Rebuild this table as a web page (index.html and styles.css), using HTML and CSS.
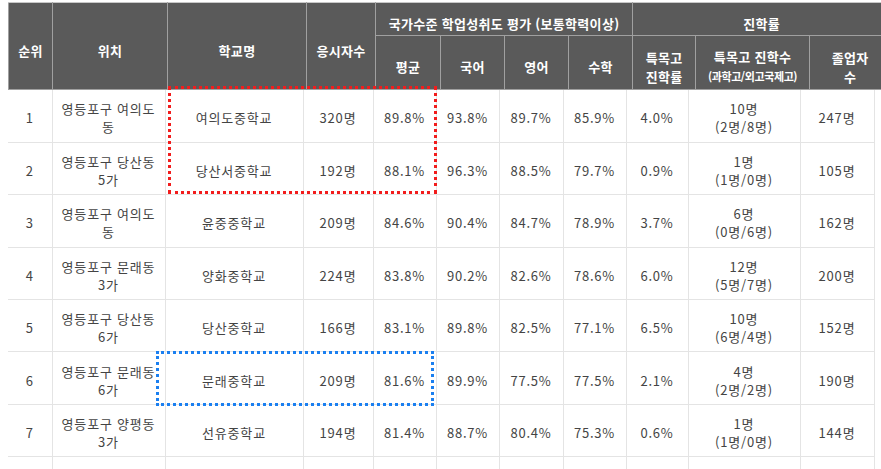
FILE: index.html
```html
<!DOCTYPE html>
<html lang="ko">
<head>
<meta charset="utf-8">
<title>영등포구 중학교 학업성취도</title>
<link rel="stylesheet" href="styles.css">
</head>
<body>
<div class="page">
  <table class="grid grid-head">
    <colgroup>
      <col class="w44"><col class="w115"><col class="w139"><col class="w69"><col class="w65">
      <col class="w64"><col class="w64"><col class="w64"><col class="w63"><col class="w114"><col class="w81">
    </colgroup>
    <tr class="hr1">
      <th rowspan="2">순위</th>
      <th rowspan="2">위치</th>
      <th rowspan="2">학교명</th>
      <th rowspan="2">응시자수</th>
      <th colspan="4">국가수준 학업성취도 평가 (보통학력이상)</th>
      <th colspan="3">진학률</th>
    </tr>
    <tr class="hr2">
      <th>평균</th>
      <th>국어</th>
      <th>영어</th>
      <th>수학</th>
      <th>특목고<br>진학률</th>
      <th>특목고 진학수<br><span class="sub">(과학고/외고국제고)</span></th>
      <th>졸업자<br>수</th>
    </tr>
  </table>
  <table class="grid grid-body">
    <colgroup>
      <col class="w44"><col class="w113"><col class="w138"><col class="w70"><col class="w63">
      <col class="w63"><col class="w64"><col class="w63"><col class="w62"><col class="w112"><col class="w74">
    </colgroup>
    <tr><td>1</td><td>영등포구 여의도동</td><td>여의도중학교</td><td>320명</td><td>89.8%</td><td>93.8%</td><td>89.7%</td><td>85.9%</td><td>4.0%</td><td>10명<br>(2명/8명)</td><td>247명</td></tr>
    <tr><td>2</td><td>영등포구 당산동 5가</td><td>당산서중학교</td><td>192명</td><td>88.1%</td><td>96.3%</td><td>88.5%</td><td>79.7%</td><td>0.9%</td><td>1명<br>(1명/0명)</td><td>105명</td></tr>
    <tr><td>3</td><td>영등포구 여의도동</td><td>윤중중학교</td><td>209명</td><td>84.6%</td><td>90.4%</td><td>84.7%</td><td>78.9%</td><td>3.7%</td><td>6명<br>(0명/6명)</td><td>162명</td></tr>
    <tr><td>4</td><td>영등포구 문래동 3가</td><td>양화중학교</td><td>224명</td><td>83.8%</td><td>90.2%</td><td>82.6%</td><td>78.6%</td><td>6.0%</td><td>12명<br>(5명/7명)</td><td>200명</td></tr>
    <tr><td>5</td><td>영등포구 당산동 6가</td><td>당산중학교</td><td>166명</td><td>83.1%</td><td>89.8%</td><td>82.5%</td><td>77.1%</td><td>6.5%</td><td>10명<br>(6명/4명)</td><td>152명</td></tr>
    <tr><td>6</td><td>영등포구 문래동 6가</td><td>문래중학교</td><td>209명</td><td>81.6%</td><td>89.9%</td><td>77.5%</td><td>77.5%</td><td>2.1%</td><td>4명<br>(2명/2명)</td><td>190명</td></tr>
    <tr><td>7</td><td>영등포구 양평동 3가</td><td>선유중학교</td><td>194명</td><td>81.4%</td><td>88.7%</td><td>80.4%</td><td>75.3%</td><td>0.6%</td><td>1명<br>(1명/0명)</td><td>144명</td></tr>
    <tr><td>&nbsp;</td><td></td><td></td><td></td><td></td><td></td><td></td><td></td><td></td><td></td><td></td></tr>
  </table>
  <div class="mark mark-red"></div>
  <div class="mark mark-blue"></div>
</div>
</body>
</html>
```

FILE: styles.css
```css
html, body {
  margin: 0;
  padding: 0;
  background: #ffffff;
  overflow: hidden;
}

.page {
  position: relative;
  padding: 2px 0 0 8px;
  width: 900px;
  height: 469px;
  overflow: hidden;
  font-family: "Noto Sans CJK KR", "Noto Sans", sans-serif;
  font-size: 13px;
  color: #444;
}

.grid {
  border-collapse: collapse;
  table-layout: fixed;
  text-align: center;
}

.grid-head {
  width: 881px;
  border: 1px solid #c8c8c8;
  border-bottom-color: #d6d6d6;
}

.grid-body {
  width: 866px;
}

.w44 { width: 44px; }
.w62 { width: 62px; }
.w63 { width: 63px; }
.w64 { width: 64px; }
.w65 { width: 65px; }
.w69 { width: 69px; }
.w70 { width: 70px; }
.w74 { width: 74px; }
.w81 { width: 81px; }
.w112 { width: 112px; }
.w113 { width: 113px; }
.w114 { width: 114px; }
.w115 { width: 115px; }
.w138 { width: 138px; }
.w139 { width: 139px; }

.grid-head th {
  background: #5a5a5a;
  color: #ffffff;
  font-weight: bold;
  font-size: 13px;
  line-height: 19px;
  letter-spacing: 0.3px;
  border: 1px solid #a0a0a0;
  padding: 8px 2px 0;
  vertical-align: middle;
}

.grid-head tr:first-child th {
  border-top-color: #c8c8c8;
}

.hr1 { height: 33px; }
.hr2 { height: 54px; }

.grid-head .sub {
  font-size: 11px;
  letter-spacing: -0.4px;
}

.grid-body td {
  border: 1px solid #e4e4e4;
  height: 52.4px;
  padding: 5px 5px 0;
  line-height: 18px;
  letter-spacing: 0.8px;
  vertical-align: middle;
  box-sizing: border-box;
}

.grid-body tr:first-child td {
  border-top: none;
}

.grid-body td:first-child {
  border-left: none;
}

.mark {
  position: absolute;
  box-sizing: border-box;
  border-width: 3px;
  border-style: dotted;
  pointer-events: none;
}

.mark-red {
  border-color: #f21c1c;
  left: 168px;
  top: 86px;
  width: 269px;
  height: 108px;
}

.mark-blue {
  border-color: #1a7ff0;
  left: 156px;
  top: 351px;
  width: 278px;
  height: 55px;
}
```
